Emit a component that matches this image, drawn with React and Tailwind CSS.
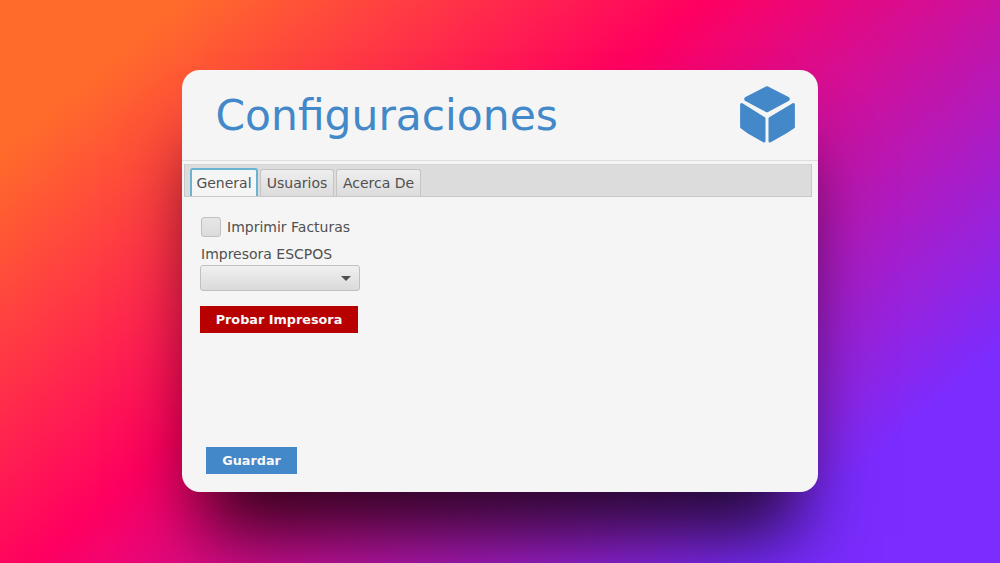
export default function App() {
  return (
    <div className="w-[1000px] h-[563px] overflow-hidden flex items-start justify-center pt-[70px] bg-[linear-gradient(140deg,#ff6b2b_11%,#ff0060_42%,#7b2cff_85%)] font-['DejaVu_Sans',sans-serif]">
      <div className="w-[636px] h-[422px] rounded-[18px] bg-[#f5f5f5] flex flex-col overflow-hidden shadow-[0_63px_70px_-20px_rgba(0,0,0,0.78)]">
        <header className="h-[91px] shrink-0 flex items-center justify-between pl-[34px] pr-[23px] border-b border-[#dedede]">
          <h1 className="text-[42.4px] leading-none mt-[3px] -ml-[0.5px] text-[#4388c8] font-normal">Configuraciones</h1>
          <svg width="55" height="57" viewBox="0 0 55 57" className="-mt-[1px]" fill="#4388c8" stroke="#4388c8" strokeLinejoin="round">
            <polygon points="27,2.5 47.5,13 27,24 6.5,13" strokeWidth="4.5" />
            <polygon points="1.6,18.5 24,32.5 24,55 9,46.5 1.6,41" strokeWidth="3" />
            <polygon points="53.4,18.5 30,32.5 30,55 45,46.5 53.4,41" strokeWidth="3" />
          </svg>
        </header>
        <div className="flex-1 flex flex-col pt-[3px] pl-[2px] pr-[6px]">
          <div className="h-[33px] shrink-0 bg-[#dcdcdc] border border-[#c8c8c8] border-t-[#d4d4d4] flex items-end gap-[2px] pl-[5px] text-[14px] text-[#505050]">
            <div className="h-[28px] w-[68px] flex items-center justify-center bg-[#f5f5f5] rounded-t-[3px] border-2 border-b-0 border-[#6ab4d2]">General</div>
            <div className="h-[27px] w-[74px] flex items-center justify-center bg-[linear-gradient(#eeeeee,#dcdcdc)] rounded-t-[3px] border border-b-0 border-[#c4c4c4]">Usuarios</div>
            <div className="h-[27px] w-[85px] flex items-center justify-center bg-[linear-gradient(#eeeeee,#dcdcdc)] rounded-t-[3px] border border-b-0 border-[#c4c4c4]">Acerca De</div>
          </div>
          <div className="flex-1 flex flex-col items-start pl-[16px] pt-[20px] pb-[18px] text-[14px] text-[#505050]">
            <label className="flex items-center gap-[6px] h-[20px] pl-[1px]">
              <span className="w-[20px] h-[20px] rounded-[3px] border border-[#c0c0c0] bg-[linear-gradient(#e6e6e6,#dcdcdc)]" />
              <span>Imprimir Facturas</span>
            </label>
            <div className="mt-[9px] h-[17px] pl-[1px] leading-[17px]">Impresora ESCPOS</div>
            <div className="mt-[2px] w-[160px] h-[26px] rounded-[3px] border border-[#c0c0c0] bg-[linear-gradient(#f0f0f0,#dadada)] flex items-center justify-end pr-[8px]">
              <span className="w-0 h-0 border-x-[5px] border-x-transparent border-t-[5px] border-t-[#505050]" />
            </div>
            <button className="mt-[15px] w-[158px] h-[27px] bg-[#b80000] text-[#f8f8f8] font-bold text-[12.8px]">Probar Impresora</button>
            <button className="mt-auto ml-[6px] w-[91px] h-[27px] bg-[#4388c8] text-[#f8f8f8] font-bold text-[12.8px]">Guardar</button>
          </div>
        </div>
      </div>
    </div>
  );
}
